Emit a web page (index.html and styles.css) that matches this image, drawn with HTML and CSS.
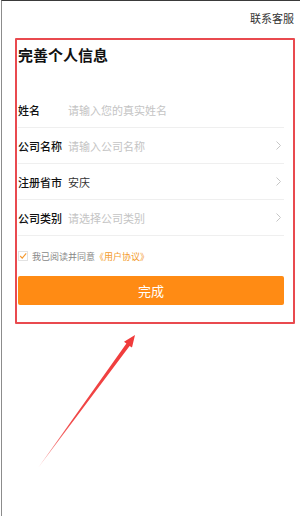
FILE: index.html
```html
<!DOCTYPE html>
<html lang="zh-CN">
<head>
    <meta charset="UTF-8">
    <meta name="viewport" content="width=device-width, initial-scale=1.0">
    <title>完善个人信息</title>
    <link rel="stylesheet" href="styles.css">
</head>
<body>
    <div class="page">
        <div class="topbar">
            <span class="service">联系客服</span>
        </div>

        <div class="card">
            <h1 class="title">完善个人信息</h1>

            <div class="form">
                <div class="row">
                    <span class="label">姓名</span>
                    <span class="value placeholder">请输入您的真实姓名</span>
                </div>
                <div class="row">
                    <span class="label">公司名称</span>
                    <span class="value placeholder">请输入公司名称</span>
                    <svg class="chevron" width="5" height="9" viewBox="0 0 5 9">
                        <polyline points="0.5,0.5 4.5,4.5 0.5,8.5" fill="none" stroke="#c6c6c6" stroke-width="1"/>
                    </svg>
                </div>
                <div class="row">
                    <span class="label">注册省市</span>
                    <span class="value">安庆</span>
                    <svg class="chevron" width="5" height="9" viewBox="0 0 5 9">
                        <polyline points="0.5,0.5 4.5,4.5 0.5,8.5" fill="none" stroke="#c6c6c6" stroke-width="1"/>
                    </svg>
                </div>
                <div class="row">
                    <span class="label">公司类别</span>
                    <span class="value placeholder">请选择公司类别</span>
                    <svg class="chevron" width="5" height="9" viewBox="0 0 5 9">
                        <polyline points="0.5,0.5 4.5,4.5 0.5,8.5" fill="none" stroke="#c6c6c6" stroke-width="1"/>
                    </svg>
                </div>
            </div>

            <div class="agree">
                <span class="check">
                    <svg width="10" height="10" viewBox="0 0 10 10">
                        <path d="M1.5 5 L4 7.6 L9 1.8" fill="none" stroke="#f59a30" stroke-width="1.4"/>
                    </svg>
                </span>
                <span class="agree-text">我已阅读并同意</span>
                <span class="agree-link">《用户协议》</span>
            </div>

            <button class="submit">完成</button>
        </div>

        <!-- 标注箭头 -->
        <svg class="arrow" width="300" height="517" viewBox="0 0 300 517">
            <defs>
                <linearGradient id="arrowFade" x1="38" y1="468" x2="135" y2="335" gradientUnits="userSpaceOnUse">
                    <stop offset="0" stop-color="#f7a0a0"/>
                    <stop offset="0.35" stop-color="#f04848"/>
                    <stop offset="1" stop-color="#f03a3a"/>
                </linearGradient>
            </defs>
            <polygon points="38,468 129.6,345.9 132,347.6 135,335 124,341.8 126.4,343.5" fill="url(#arrowFade)"/>
        </svg>
    </div>
</body>
</html>
```

FILE: styles.css
```css
/* 基础设置 */
body {
    margin: 0;
    font-family: "Noto Sans CJK SC", "Noto Sans", sans-serif;
    background: #fff;
    color: #222;
}

.page {
    position: relative;
    height: 516px;
    margin-left: 1px;
    border-left: 1px solid #8c8c8c;
    border-top: 1px solid #3a3a3a;
    box-sizing: border-box;
}

.topbar {
    display: flex;
    justify-content: flex-end;
    height: 37px;
    padding: 9px 6px 0 0;
    box-sizing: border-box;
}

.service {
    font-size: 11px;
    line-height: 16px;
    color: #333;
}

/* 红框卡片 */
.card {
    margin: 0 5px 0 13px;
    border: 2px solid #e94a4f;
    border-radius: 1px;
    padding: 3px 9px 17px 1px;
}

.title {
    margin: 0;
    font-size: 15px;
    font-weight: bold;
    line-height: 24px;
    color: #111;
}

.form {
    margin-top: 25px;
}

.row {
    display: flex;
    align-items: center;
    height: 36px;
    border-bottom: 1px solid #efefef;
    box-sizing: border-box;
}

.label {
    width: 50px;
    flex-shrink: 0;
    font-size: 11px;
    font-weight: 500;
    color: #111;
}

.value {
    flex: 1;
    font-size: 11px;
    color: #333;
}

.placeholder {
    color: #c4c4c4;
}

.chevron {
    margin-right: 3px;
}

/* 协议勾选 */
.agree {
    display: flex;
    align-items: center;
    height: 40px;
    font-size: 9px;
}

.check {
    display: flex;
    width: 10px;
    height: 10px;
    margin-right: 4px;
    border: 1px solid #e2e2e2;
    box-sizing: border-box;
    align-items: center;
    justify-content: center;
}

.agree-text {
    color: #888;
}

.agree-link {
    color: #f39a2c;
}

.submit {
    display: block;
    width: 100%;
    height: 29px;
    border: none;
    border-radius: 2px;
    background: #ff8b14;
    color: #fff;
    font-family: inherit;
    font-size: 13px;
}

/* 标注箭头 */
.arrow {
    position: absolute;
    left: -2px;
    top: -1px;
    pointer-events: none;
}
```
